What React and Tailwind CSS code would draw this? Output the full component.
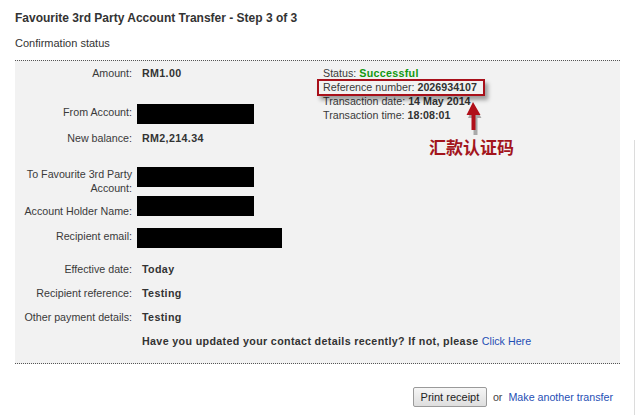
import React from "react";

const font = { fontFamily: '"Liberation Sans", Arial, sans-serif' };

function Fila({ alto, ptLabel, label, children }) {
  return (
    <div className="flex" style={{ height: alto }}>
      <div
        className="w-[117px] shrink-0 text-right whitespace-nowrap leading-[14px] text-[#3a3a3a]"
        style={{ paddingTop: ptLabel }}
      >
        {label}
      </div>
      <div className="ml-[5px]">{children}</div>
    </div>
  );
}

function Valor({ pt = 5, children }) {
  return (
    <div
      className="pl-[5px] font-bold leading-[14px] tracking-[0.35px] whitespace-nowrap text-[#333]"
      style={{ paddingTop: pt }}
    >
      {children}
    </div>
  );
}

function Tapado({ pt, ancho }) {
  return (
    <div style={{ paddingTop: pt }}>
      <div className="h-[20px] bg-black" style={{ width: ancho }}></div>
    </div>
  );
}

export default function App() {
  return (
    <div
      className="relative w-[635px] h-[415px] overflow-hidden bg-white text-[10.7px] text-[#333]"
      style={font}
    >
      <div className="pl-[15px] pt-[11px]">
        <h1 className="text-[12px] font-bold leading-[14px] text-[#333]">
          Favourite 3rd Party Account Transfer - Step 3 of 3
        </h1>
        <p className="mt-[11px] text-[11px] leading-[14px] text-[#333]">Confirmation status</p>
      </div>

      <div className="ml-[15px] mt-[10px] w-[605px] border-y border-dotted border-[#555] bg-[#f2f2f2] pb-[10px]">
        <div className="flex">
          <div className="w-[308px] shrink-0">
            <Fila alto={38} ptLabel={5} label="Amount:">
              <Valor>RM1.00</Valor>
            </Fila>
            <Fila alto={27} ptLabel={6} label="From Account:">
              <Tapado pt={5} ancho={117} />
            </Fila>
            <Fila alto={36} ptLabel={5} label="New balance:">
              <Valor>RM2,214.34</Valor>
            </Fila>
          </div>
          <div className="pt-[5px] leading-[14px] text-[#3a3a3a]">
            <p>
              Status: <span className="font-bold tracking-[0.3px] text-[#119911]">Successful</span>
            </p>
            <p>
              Reference number: <span className="font-bold text-[#333]">2026934107</span>
            </p>
            <p>
              Transaction date: <span className="font-bold text-[#333]">14 May 2014</span>
            </p>
            <p>
              Transaction time: <span className="font-bold text-[#333]">18:08:01</span>
            </p>
          </div>
        </div>

        <Fila
          alto={33}
          ptLabel={5}
          label={
            <>
              To Favourite 3rd Party
              <br />
              Account:
            </>
          }
        >
          <Tapado pt={5} ancho={117} />
        </Fila>
        <Fila alto={27} ptLabel={9} label="Account Holder Name:">
          <Tapado pt={1} ancho={117} />
        </Fila>
        <Fila alto={35} ptLabel={7} label="Recipient email:">
          <Tapado pt={6} ancho={145} />
        </Fila>
        <Fila alto={24} ptLabel={5} label="Effective date:">
          <Valor>Today</Valor>
        </Fila>
        <Fila alto={24} ptLabel={5} label="Recipient reference:">
          <Valor>Testing</Valor>
        </Fila>
        <Fila alto={24} ptLabel={5} label="Other payment details:">
          <Valor>Testing</Valor>
        </Fila>
        <Fila alto={24} ptLabel={5} label="">
          <Valor>
            Have you updated your contact details recently? If not, please{" "}
            <a href="#" className="font-normal tracking-normal text-[#1f4fb5]">
              Click Here
            </a>
          </Valor>
        </Fila>
      </div>

      <div className="mt-[23px] flex items-center justify-end pr-[22px]">
        <button className="h-[20px] w-[74px] rounded-[2px] border border-[#9a9a9a] bg-gradient-to-b from-[#f6f6f6] to-[#dedede] text-[11px] leading-[18px] text-[#222]">
          Print receipt
        </button>
        <span className="ml-[6px] text-[#444]">or</span>
        <a href="#" className="ml-[6px] text-[#1f4fb5]">
          Make another transfer
        </a>
      </div>

      {/* anotación sobre la captura */}
      <div className="absolute left-[317px] top-[79px] h-[17px] w-[168px] border-2 border-[#a8101a] shadow-[3px_4px_4px_rgba(0,0,0,0.35)]"></div>
      <svg
        className="absolute left-[463px] top-[100px]"
        width="26"
        height="36"
        viewBox="0 0 26 36"
      >
        <path d="M8 3 L15.5 16 L11.5 16 L11.5 33 L7.5 33 L7.5 16 L2 16 Z" fill="rgba(0,0,0,0.3)" transform="translate(3 2)" />
        <path d="M10 2 L17.5 15 L12.5 15 L12.5 30 L8.5 30 L8.5 15 L3.5 15 Z" fill="#b0101a" />
      </svg>
      <div
        className="absolute left-[429px] top-[136px] text-[17px] font-bold leading-[22px] text-[#a3151c]"
        style={{ fontFamily: '"Noto Sans CJK SC", "Noto Sans CJK TC", sans-serif' }}
      >
        汇款认证码
      </div>
      <div className="absolute left-[634px] top-[140px] h-[275px] w-[1px] bg-[#dcdcdc]"></div>
    </div>
  );
}
